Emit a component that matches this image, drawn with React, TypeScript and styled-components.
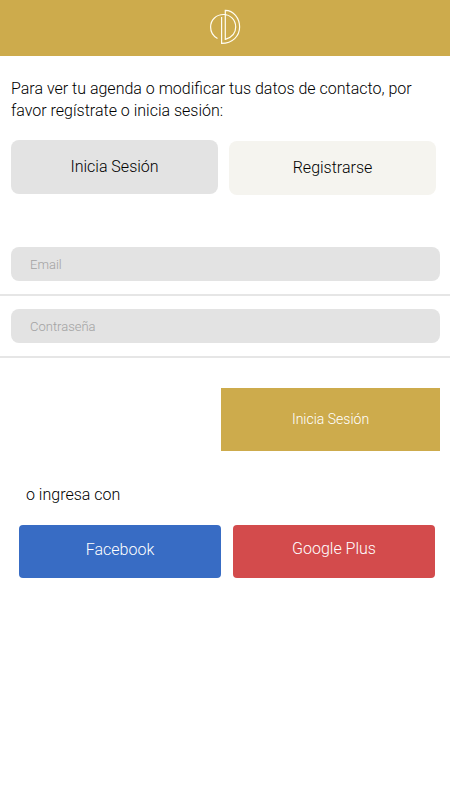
import React from "react";
import styled, { createGlobalStyle } from "styled-components";

const GlobalStyle = createGlobalStyle`
  *, *::before, *::after { box-sizing: border-box; }
  body {
    margin: 0;
    background: #ffffff;
    color: #000000;
    font-family: Roboto, "Liberation Sans", sans-serif;
    font-size: 16px;
    font-weight: 300;
    line-height: 22px;
  }
  button, input { font: inherit; }
`;

const Header = styled.header`
  display: flex;
  align-items: center;
  justify-content: center;
  height: 56px;
  padding-bottom: 2px;
  background: #cdab4c;
`;

const Logo = styled.svg`
  width: 32px;
  height: 36px;
  fill: none;
  stroke: #fffdf2;
  stroke-width: 1.2;
`;

const Intro = styled.p`
  margin: 0;
  padding: 22px 11px 0;
`;

const Tabs = styled.div`
  display: grid;
  grid-template-columns: 1fr 1fr;
  gap: 11px;
  padding: 18px 14px 0 11px;
`;

const Tab = styled.button<{ $active?: boolean }>`
  height: 54px;
  margin-top: ${({ $active }) => ($active ? 0 : 1)}px;
  padding: 0;
  border: 0;
  border-radius: 8px;
  background: ${({ $active }) => ($active ? "#e3e3e3" : "#f5f4ef")};
  color: #000000;
  cursor: pointer;
`;

const Form = styled.form`
  display: flex;
  flex-direction: column;
  padding-top: 39px;
`;

const Field = styled.label`
  display: block;
  padding: 13px 10px 13px 11px;
  border-bottom: 2px solid #e6e6e6;
`;

const Input = styled.input`
  display: block;
  width: 100%;
  height: 34px;
  padding: 0 19px;
  border: 0;
  border-radius: 8px;
  background: #e3e3e3;
  font-size: 13px;
  &::placeholder { color: #a2a2a2; opacity: 1; }
`;

const Submit = styled.button`
  align-self: flex-end;
  width: calc(50% - 6px);
  height: 63px;
  margin: 30px 10px 0 0;
  padding: 0 0 2px;
  border: 0;
  background: #cdab4c;
  color: #ffffff;
  font-size: 14px;
  cursor: pointer;
`;

const Social = styled.section`
  padding: 33px 15px 24px 19px;
`;

const SocialTitle = styled.p`
  margin: 0 0 19px;
  padding-left: 7px;
`;

const SocialButtons = styled.div`
  display: grid;
  grid-template-columns: 1fr 1fr;
  gap: 12px;
`;

const SocialButton = styled.button<{ $color: string; $lift: number }>`
  height: 53px;
  padding: 0 0 ${({ $lift }) => $lift}px;
  border: 0;
  border-radius: 4px;
  background: ${({ $color }) => $color};
  color: #ffffff;
  cursor: pointer;
`;

export default function App() {
  return (
    <>
      <GlobalStyle />
      <Header>
        <Logo viewBox="0 0 32 36" aria-hidden="true">
          <path d="M8.5 29.5C4.3 27.2 1.6 23 1.6 18C1.6 10.5 7.5 5.5 14.5 5.5C21.5 5.5 26.7 11 26.7 18C26.7 24 23 28.4 16.3 30.3V1.3C24.5 1.3 30.6 9 30.6 18C30.6 27 23.5 34.4 12.6 34.4V8" />
        </Logo>
      </Header>
      <main>
        <Intro>
          Para ver tu agenda o modificar tus datos de contacto, por favor
          regístrate o inicia sesión:
        </Intro>
        <Tabs>
          <Tab type="button" $active aria-pressed="true">Inicia Sesión</Tab>
          <Tab type="button" aria-pressed="false">Registrarse</Tab>
        </Tabs>
        <Form onSubmit={(event) => event.preventDefault()}>
          <Field>
            <Input type="email" placeholder="Email" aria-label="Email" />
          </Field>
          <Field>
            <Input type="password" placeholder="Contraseña" aria-label="Contraseña" />
          </Field>
          <Submit type="submit">Inicia Sesión</Submit>
        </Form>
        <Social>
          <SocialTitle>o ingresa con</SocialTitle>
          <SocialButtons>
            <SocialButton type="button" $color="#386cc4" $lift={3}>Facebook</SocialButton>
            <SocialButton type="button" $color="#d34b4c" $lift={5}>Google Plus</SocialButton>
          </SocialButtons>
        </Social>
      </main>
    </>
  );
}
